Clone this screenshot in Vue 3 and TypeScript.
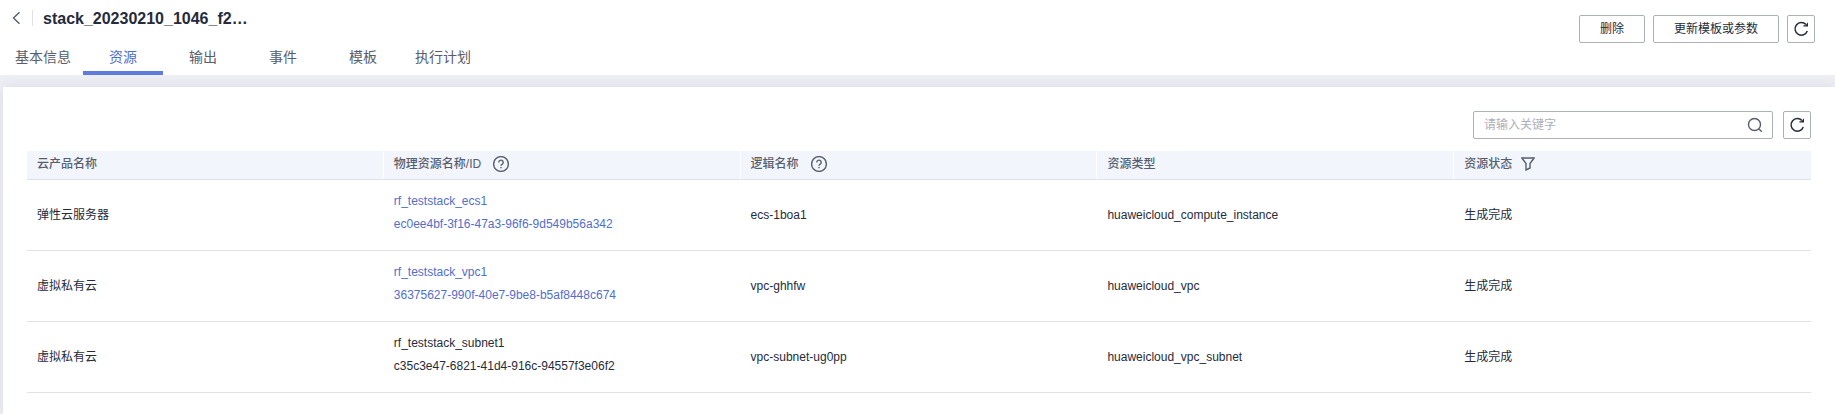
<script setup lang="ts">
import { ref } from 'vue'

interface Resource {
  product: string
  name: string
  id: string
  linked: boolean
  logical: string
  type: string
  status: string
}

const tabs = ['基本信息', '资源', '输出', '事件', '模板', '执行计划']
const active = ref('资源')
const keyword = ref('')

const rows: Resource[] = [
  {
    product: '弹性云服务器',
    name: 'rf_teststack_ecs1',
    id: 'ec0ee4bf-3f16-47a3-96f6-9d549b56a342',
    linked: true,
    logical: 'ecs-1boa1',
    type: 'huaweicloud_compute_instance',
    status: '生成完成',
  },
  {
    product: '虚拟私有云',
    name: 'rf_teststack_vpc1',
    id: '36375627-990f-40e7-9be8-b5af8448c674',
    linked: true,
    logical: 'vpc-ghhfw',
    type: 'huaweicloud_vpc',
    status: '生成完成',
  },
  {
    product: '虚拟私有云',
    name: 'rf_teststack_subnet1',
    id: 'c35c3e47-6821-41d4-916c-94557f3e06f2',
    linked: false,
    logical: 'vpc-subnet-ug0pp',
    type: 'huaweicloud_vpc_subnet',
    status: '生成完成',
  },
]
</script>

<template>
  <div class="page">
    <header class="top">
      <div class="heading">
        <div class="title-row">
          <button class="back" type="button" aria-label="返回">
            <svg width="10" height="16" viewBox="0 0 10 16"><path d="M7.5 2.2 1.5 8l6 5.8" /></svg>
          </button>
          <h1>stack_20230210_1046_f2…</h1>
        </div>
        <nav class="tabs">
          <button
            v-for="tab in tabs"
            :key="tab"
            type="button"
            class="tab"
            :class="{ on: tab === active }"
            @click="active = tab"
          >{{ tab }}</button>
        </nav>
      </div>
      <div class="actions">
        <button class="btn" type="button">删除</button>
        <button class="btn" type="button">更新模板或参数</button>
        <button class="btn square" type="button" aria-label="刷新">
          <svg class="refresh" width="16" height="16" viewBox="0 0 16 16">
            <path class="arc" d="M13 3.6A6.3 6.3 0 1 0 14.300 10" />
            <path class="head" d="M15 1.300v4.200h-4.600v-1.300h2.200z" />
          </svg>
        </button>
      </div>
    </header>

    <main class="panel">
      <div class="toolbar">
        <div class="search">
          <input v-model="keyword" type="text" placeholder="请输入关键字" aria-label="关键字" />
          <button type="button" class="icon" aria-label="搜索">
            <svg width="16" height="16" viewBox="0 0 16 16">
              <circle cx="7.5" cy="7.5" r="6" /><path d="m12 12 2.8 2.8" />
            </svg>
          </button>
        </div>
        <button class="btn square" type="button" aria-label="刷新列表">
          <svg class="refresh" width="16" height="16" viewBox="0 0 16 16">
            <path class="arc" d="M13 3.6A6.3 6.3 0 1 0 14.300 10" />
            <path class="head" d="M15 1.300v4.200h-4.600v-1.300h2.200z" />
          </svg>
        </button>
      </div>

      <table>
        <thead>
          <tr>
            <th scope="col"><div class="cell">云产品名称</div></th>
            <th scope="col">
              <div class="cell help">
                物理资源名称/ID
                <svg width="16" height="16" viewBox="0 0 16 16">
                  <circle cx="8" cy="8" r="7.4" />
                  <path d="M5.8 6.4a2.2 2.2 0 1 1 3.5 1.7C8.500 8.600 8 8.900 8 9.800M8 11v1.300" />
                </svg>
              </div>
            </th>
            <th scope="col">
              <div class="cell help">
                逻辑名称
                <svg width="16" height="16" viewBox="0 0 16 16">
                  <circle cx="8" cy="8" r="7.4" />
                  <path d="M5.8 6.4a2.2 2.2 0 1 1 3.5 1.7C8.500 8.600 8 8.900 8 9.800M8 11v1.300" />
                </svg>
              </div>
            </th>
            <th scope="col"><div class="cell">资源类型</div></th>
            <th scope="col">
              <div class="cell">
                资源状态
                <button type="button" class="icon" aria-label="筛选">
                  <svg width="14" height="14" viewBox="0 0 14 14">
                    <path d="M.9 1h12.200L9 6.500V11l-4 2V6.500z" />
                  </svg>
                </button>
              </div>
            </th>
          </tr>
        </thead>
        <tbody>
          <tr v-for="row in rows" :key="row.id">
            <td>{{ row.product }}</td>
            <td>
              <div class="names">
                <template v-if="row.linked">
                  <a href="#">{{ row.name }}</a>
                  <a href="#">{{ row.id }}</a>
                </template>
                <template v-else>
                  <span>{{ row.name }}</span>
                  <span>{{ row.id }}</span>
                </template>
              </div>
            </td>
            <td>{{ row.logical }}</td>
            <td>{{ row.type }}</td>
            <td>{{ row.status }}</td>
          </tr>
        </tbody>
      </table>
    </main>
  </div>
</template>

<style>
body {
  margin: 0;
  background: #eeeff5;
}
</style>

<style scoped>
.page {
  display: flex;
  flex-direction: column;
  min-height: 100vh;
  font: 12px/18px "Liberation Sans", "Noto Sans CJK SC", sans-serif;
  color: #252b3a;
}
button,
input {
  font: inherit;
  color: inherit;
  margin: 0;
  padding: 0;
  border: 0;
  background: none;
}
svg {
  display: block;
  flex: none;
  fill: none;
  stroke: #575d6c;
  stroke-width: 1.4;
}
.top {
  display: flex;
  justify-content: space-between;
  background: #fff;
}
.title-row {
  display: flex;
  align-items: center;
  height: 36px;
  padding: 0 12px;
}
.back {
  padding-right: 10px;
  border-right: 1px solid #dfe1e6;
}
h1 {
  margin: 0 0 0 10px;
  padding-top: 2px;
  font-size: 16px;
  line-height: 20px;
}
.tabs {
  display: flex;
  padding-left: 3px;
}
.tab {
  box-sizing: border-box;
  width: 80px;
  height: 39px;
  padding-top: 6px;
  border-bottom: 4px solid transparent;
  font-size: 14px;
  line-height: 20px;
  color: #575d6c;
}
.tab.on {
  color: #526ecc;
  border-color: #5e7ce0;
}
.actions {
  display: flex;
  gap: 8px;
  padding: 15px 20px 0 0;
}
.btn {
  box-sizing: border-box;
  height: 28px;
  padding: 0 20px;
  border: 1px solid #adb0b8;
  border-radius: 2px;
  background: #fff;
}
.square {
  display: flex;
  align-items: center;
  justify-content: center;
  width: 28px;
  padding: 0;
}
.refresh .arc {
  stroke: #252b3a;
  stroke-width: 1.5;
}
.refresh .head {
  fill: #252b3a;
  stroke: none;
}
.panel {
  flex: 1;
  margin: 12px 0 0 3px;
  padding: 24px 24px 0;
  background: #fff;
  box-shadow: 0 0 12px rgba(40, 45, 80, 0.1);
}
.toolbar {
  display: flex;
  justify-content: flex-end;
  gap: 10px;
  margin-bottom: 12px;
}
.search {
  box-sizing: border-box;
  display: flex;
  align-items: center;
  width: 300px;
  height: 28px;
  padding: 0 9px 0 10px;
  border: 1px solid #adb0b8;
  border-radius: 2px;
}
.search input {
  flex: 1;
  min-width: 0;
  outline: 0;
}
.search input::placeholder {
  color: #adb0b8;
  opacity: 1;
}
table {
  width: 100%;
  table-layout: fixed;
  border-collapse: separate;
  border-spacing: 0;
}
th,
td {
  padding: 0 10px;
  text-align: left;
  border-bottom: 1px solid #dfe1e6;
}
th {
  height: 28px;
  background: linear-gradient(#fff, #fff) right / 1px 100% no-repeat #f2f5fc;
  color: #575d6c;
  font-weight: 500;
}
th:last-child {
  background: #f2f5fc;
}
td {
  height: 70px;
}
.cell {
  box-sizing: border-box;
  display: flex;
  align-items: center;
  gap: 9px;
  height: 28px;
  padding-bottom: 2px;
}
.help {
  gap: 12px;
}
.names {
  display: flex;
  flex-direction: column;
  align-items: flex-start;
  gap: 5px;
  padding-bottom: 5px;
}
a {
  color: #526ecc;
  text-decoration: none;
}
</style>
